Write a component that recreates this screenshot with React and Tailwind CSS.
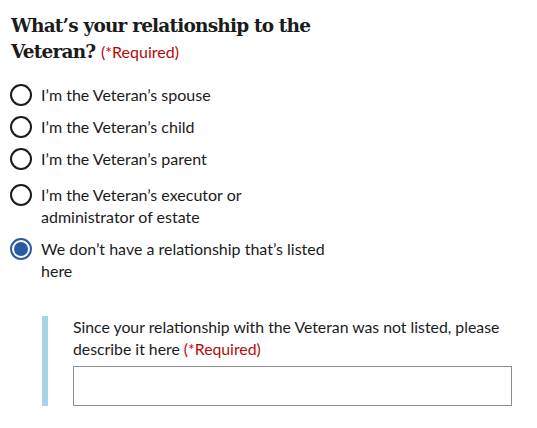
import React, { useState } from 'react'

const options = [
  { id: 'spouse', label: 'I’m the Veteran’s spouse' },
  { id: 'child', label: 'I’m the Veteran’s child' },
  { id: 'parent', label: 'I’m the Veteran’s parent' },
  { id: 'executor', label: 'I’m the Veteran’s executor or administrator of estate' },
  { id: 'other', label: 'We don’t have a relationship that’s listed here' },
]

const Radio = ({ checked }) => {
  if (checked) {
    return (
      <span className="flex h-[22px] w-[22px] shrink-0 items-center justify-center rounded-full border-2 border-[#2a5aa3] bg-white">
        <span className="h-[14px] w-[14px] rounded-full bg-[#2a5aa3]"></span>
      </span>
    )
  }
  return <span className="h-[22px] w-[22px] shrink-0 rounded-full border-2 border-[#1b1b1b] bg-white"></span>
}

const App = () => {
  const [selected, setSelected] = useState('other')
  const [other, setOther] = useState('')

  return (
    <div className="min-h-[428px] bg-white pl-[10px] pr-[25px] pt-[13px] text-[#1b1b1b] [font-family:Lato,'Noto_Sans',sans-serif]">
      <fieldset>
        <legend className="w-[330px] pl-px text-[18.5px] font-bold leading-[26px] tracking-[-0.8px] [font-family:'DejaVu_Serif',serif]">
          What’s your relationship to the Veteran?{' '}
          <span className="text-[16px] font-normal tracking-normal text-[#b50909] [font-family:Lato,sans-serif]">
            (*Required)
          </span>
        </legend>

        <div className="mt-[19px] flex flex-col gap-[10px]">
          {options.map((opt) => (
            <label
              key={opt.id}
              onClick={() => setSelected(opt.id)}
              className={`flex cursor-pointer items-start gap-[9px] ${opt.id === 'executor' ? 'mt-[4px]' : ''}`}
            >
              <Radio checked={selected === opt.id} />
              <span className="max-w-[288px] text-[16px] leading-[22px]">{opt.label}</span>
            </label>
          ))}
        </div>
      </fieldset>

      <div className="ml-[32px] mt-[35px] border-l-[6px] border-[#a8d4ea] pl-[25px]">
        <label htmlFor="other-rel" className="-mt-px block text-[15.8px] leading-[22px]">
          Since your relationship with the Veteran was not listed, please describe it here{' '}
          <span className="text-[#b50909]">(*Required)</span>
        </label>
        <input
          id="other-rel"
          value={other}
          onChange={(e) => setOther(e.target.value)}
          className="mt-[6px] block h-[40px] w-full border border-[#8a8f93] bg-white px-2 outline-none"
        />
      </div>
    </div>
  )
}

export default App
